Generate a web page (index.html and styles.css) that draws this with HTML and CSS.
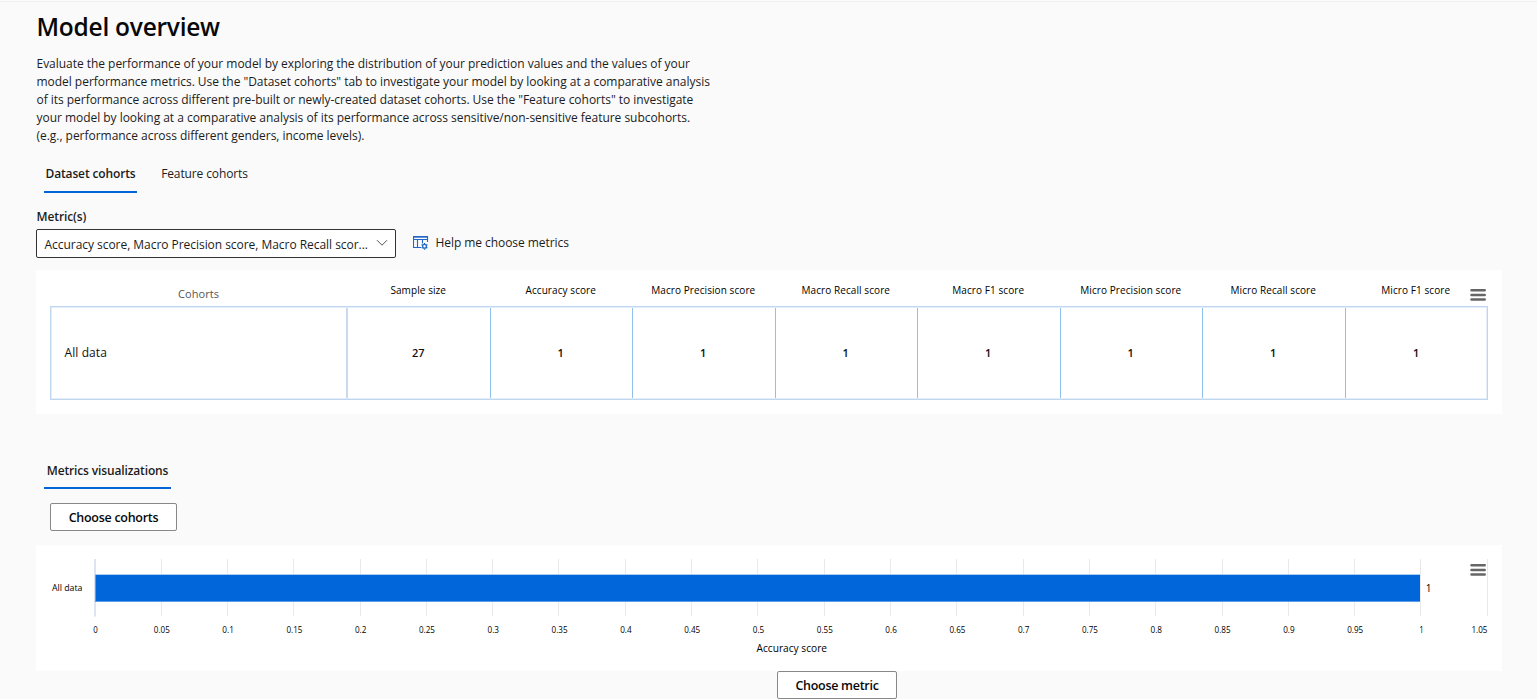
FILE: index.html
```html
<!DOCTYPE html>
<html lang="en">
<head>
<meta charset="utf-8">
<title>Model overview</title>
<link rel="stylesheet" href="styles.css">
</head>
<body>
<main class="page">
  <h1 class="title">Model overview</h1>
  <p class="intro">
    <span>Evaluate the performance of your model by exploring the distribution of your prediction values and the values of your</span>
    <span>model performance metrics. Use the "Dataset cohorts" tab to investigate your model by looking at a comparative analysis</span>
    <span>of its performance across different pre-built or newly-created dataset cohorts. Use the "Feature cohorts" to investigate</span>
    <span>your model by looking at a comparative analysis of its performance across sensitive/non-sensitive feature subcohorts.</span>
    <span>(e.g., performance across different genders, income levels).</span>
  </p>
  <nav class="tabs">
    <a class="tab tab-active">Dataset cohorts</a>
    <a class="tab">Feature cohorts</a>
  </nav>
  <div class="field-label">Metric(s)</div>
  <div class="field-row">
    <div class="dropdown">
      <span>Accuracy score, Macro Precision score, Macro Recall scor...</span>
      <svg class="chevron" width="12" height="8" viewBox="0 0 12 8"><path d="M1 1.2l5 5 5-5" fill="none" stroke="#555" stroke-width="1"/></svg>
    </div>
    <a class="help">
      <svg width="16" height="16" viewBox="0 0 16 16" fill="none" stroke="#2068c8">
        <path d="M8 12.500H.5v-11h14V7M.5 4.500h14M4.500 4.500v8M9.500 4.500v4" stroke-width="1.1"/>
        <path d="M.5 2.200h14" stroke-width="1"/>
        <circle cx="11.500" cy="11.300" r="1.900" stroke-width="1.300"/>
        <path d="M11.500 7.900v1.300M11.500 13.400v1.300M8.600 9.600l1.100.6M13.300 12.400l1.100.6M8.600 13l1.100-.6M13.300 10.200l1.100-.6" stroke-width="1.300"/>
      </svg>
      <span>Help me choose metrics</span>
    </a>
  </div>

  <section class="card table-card">
    <div class="table-head">
      <div class="head-cohort">Cohorts</div>
      <div>Sample size</div><div>Accuracy score</div><div>Macro Precision score</div><div>Macro Recall score</div><div>Macro F1 score</div><div>Micro Precision score</div><div>Micro Recall score</div><div>Micro F1 score</div>
    </div>
    <div class="table-row">
      <div class="cell-name">All data</div>
      <div>27</div><div>1</div><div>1</div><div>1</div><div>1</div><div>1</div><div>1</div><div>1</div>
    </div>
    <svg class="menu" width="16" height="14" viewBox="0 0 16 14"><path d="M1.500 2.300h13.200M1.500 7h13.200M1.500 11.500h13.200" stroke="#666" stroke-width="2.500" stroke-linecap="round"/></svg>
  </section>

  <nav class="tabs tabs-viz">
    <a class="tab tab-active">Metrics visualizations</a>
  </nav>
  <button class="btn btn-cohorts">Choose cohorts</button>

  <section class="card chart-card">
    <svg class="chart" width="1466" height="126" viewBox="36 545 1466 126">
      <g id="grid" stroke="#e9e9ec" stroke-width="1"></g>
      <path d="M95 559v57.500" stroke="#dfe2f0" stroke-width="2"/>
      <rect x="95.500" y="574.500" width="1324.500" height="27.300" fill="#0066d9"/>
      <path d="M95 574.500h1325" stroke="#a9cdf3"/>
      <path d="M95 601.500h1325" stroke="#5a9ce8"/>
      <path d="M95.500 575v27" stroke="#5a9ce8"/>
      <g id="ticks" class="tick" text-anchor="middle"></g>
      <text class="cat" x="52" y="591" textLength="30.500" lengthAdjust="spacingAndGlyphs">All data</text>
      <text class="val" x="1428.500" y="592" text-anchor="middle">1</text>
      <text class="axis-title" x="756.500" y="652" textLength="70.500" lengthAdjust="spacingAndGlyphs">Accuracy score</text>
    </svg>
    <svg class="menu" width="16" height="14" viewBox="0 0 16 14"><path d="M1.500 2.300h13.200M1.500 7h13.200M1.500 11.500h13.200" stroke="#666" stroke-width="2.500" stroke-linecap="round"/></svg>
  </section>
  <div class="metric-row"><button class="btn btn-metric">Choose metric</button></div>
</main>
<script src="chart.js"></script>
</body>
</html>
```
FILE: styles.css
```css
* { box-sizing: border-box; }
html, body { margin: 0; height: 699px; overflow: hidden; }
body { background: #fafafa; color: #1c1c1c; font-family: "Open Sans", "Noto Sans", sans-serif; font-size: 12px; }
.page { border-top: 1px solid #f0f0f0; margin-top: 1px; padding: 0 35px 0 36px; }
.title { margin: 9px 0 0 0.5px; height: 32px; line-height: 32px; font-size: 24.5px; font-weight: 600; color: #080808; letter-spacing: -0.25px; white-space: nowrap; }
.intro { margin: 12px 0 0 0.5px; line-height: 18px; white-space: nowrap; }
.intro span { display: table; letter-spacing: -0.032px; }
.tabs { display: flex; margin: 8px 0 0 8px; gap: 21px; height: 40px; }
.tab { display: flex; align-items: center; justify-content: center; height: 40px; padding-top: 1px; width: 93px; letter-spacing: -0.12px; white-space: nowrap; }
.tab-active { border-bottom: 2px solid #0064d6; font-weight: 600; padding-top: 3px; letter-spacing: -0.14px; }
.field-label { margin: 15px 0 0 0.5px; height: 18px; line-height: 18px; font-weight: 600; letter-spacing: -0.1px; }
.field-row { display: flex; align-items: center; margin-top: 3px; height: 29px; }
.dropdown { display: flex; align-items: center; justify-content: space-between; width: 360px; height: 29px; padding: 1px 7px 0 7.5px; border: 1px solid #333; border-radius: 2px; background: #fff; letter-spacing: -0.04px; white-space: nowrap; }
.chevron { margin-top: -3px; }
.help { display: flex; align-items: center; gap: 6.5px; margin: -2px 0 0 17px; letter-spacing: -0.06px; white-space: nowrap; }
.card { position: relative; background: #fff; }
.table-card { margin-top: 12px; height: 144px; padding: 10px 14px 0 14px; }
.table-head, .table-row { display: grid; grid-template-columns: 297px repeat(8, 142.500px); width: 1438px; }
.table-head { height: 26px; font-size: 10px; color: #000; font-weight: 500; text-align: center; line-height: 20px; letter-spacing: 0.08px; white-space: nowrap; }
.head-cohort { font-size: 11px; font-weight: 400; line-height: 28px; color: #555; }
.table-row { height: 94px; border: 1px solid #bfd6ee; outline: 1px solid #e4eefa; outline-offset: -2px; font-size: 11px; font-weight: 600; color: #111; }
.table-row > div { display: flex; align-items: center; justify-content: center; border-right: 1px solid #8fc1ec; margin-left: -1px; padding-bottom: 1px; }
.table-row > div:last-child { border-right: 0; }
.table-row > .cell-name { justify-content: flex-start; margin-left: 0; padding-left: 13.5px; border-right: 2px solid #ccd8ee; font-size: 12px; font-weight: 500; letter-spacing: 0.1px; }
.menu { position: absolute; right: 16px; top: 18px; }
.tabs-viz { margin-top: 35px; }
.tabs-viz .tab { width: 127px; padding-top: 5px; }
.btn { display: flex; align-items: center; justify-content: center; padding: 0; height: 28px; border: 1px solid #8a8886; border-radius: 2px; background: #fff; color: #080808; font: 600 12.5px "Open Sans", "Noto Sans", sans-serif; letter-spacing: -0.28px; white-space: nowrap; }
.btn-cohorts { margin: 14px 0 0 14px; width: 127px; }
.chart-card { margin-top: 14px; height: 126px; }
.chart { display: block; }
.chart text { fill: #000; }
.tick, .cat { font-size: 9px; }
.val { font-size: 10px; }
.axis-title { font-size: 11px; }
.metric-row { display: flex; padding-left: 741px; }
.btn-metric { width: 120px; }
```
FILE: chart.js
```js
const NS = 'http://www.w3.org/2000/svg';
const grid = document.getElementById('grid');
const ticks = document.getElementById('ticks');
for (let i = 0; i <= 21; i++) {
  const x = 95 + i * 66.3;
  if (i) {
    const line = document.createElementNS(NS, 'path');
    line.setAttribute('d', `M${Math.floor(x - 0.1) + 0.5} 559v57`);
    grid.appendChild(line);
  }
  const text = document.createElementNS(NS, 'text');
  const label = String(Math.round(i * 5) / 100);
  text.textContent = label;
  text.setAttribute('x', i === 21 ? 1479.5 : x + 0.5);
  text.setAttribute('y', 633);
  text.setAttribute('textLength', { 1: 4.5, 3: 11.5, 4: 16 }[label.length]);
  text.setAttribute('lengthAdjust', 'spacingAndGlyphs');
  ticks.appendChild(text);
}
```
